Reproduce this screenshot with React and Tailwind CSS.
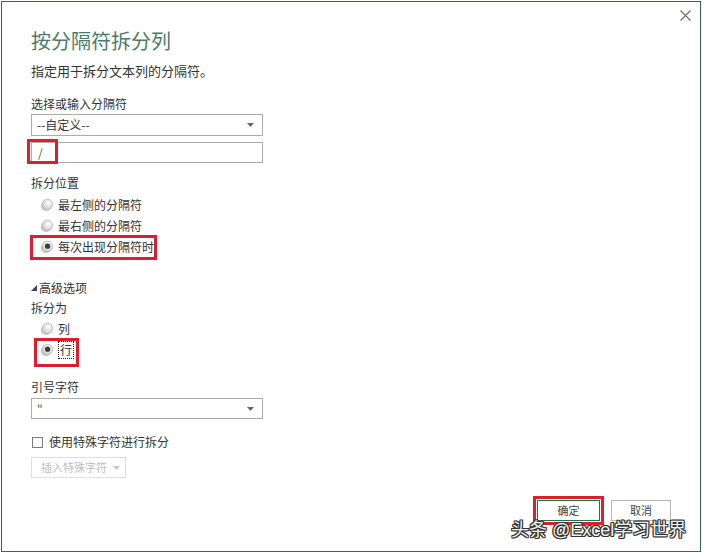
import React from "react";

const font = { fontFamily: '"Noto Sans CJK SC", "Noto Sans", sans-serif' };

function Radio({ checked }) {
  return (
    <svg width="14" height="14" viewBox="0 0 14 14" className="shrink-0">
      <defs>
        <radialGradient id={checked ? "rg1" : "rg0"} cx="0.6" cy="0.35" r="0.7">
          <stop offset="0" stopColor="#ffffff" />
          <stop offset="1" stopColor="#c9c9c9" />
        </radialGradient>
      </defs>
      <ellipse cx="6" cy="8.2" rx="5.2" ry="5" fill="#9aa0a6" opacity="0.55" />
      <circle cx="7.4" cy="6.4" r="5.2" fill={`url(#${checked ? "rg1" : "rg0"})`} stroke="#b4b4b4" strokeWidth="0.8" />
      {checked && <circle cx="7.6" cy="6.2" r="2.6" fill="#3a3a3a" />}
    </svg>
  );
}

function Caret({ color = "#666" }) {
  return (
    <svg width="7" height="4" viewBox="0 0 7 4">
      <polygon points="0,0 7,0 3.5,4" fill={color} />
    </svg>
  );
}

function RedBox({ className }) {
  return <span className={`pointer-events-none absolute border-[3px] border-[#dc1f2e] ${className}`} />;
}

export default function App() {
  return (
    <div className="w-[702px] h-[553px] bg-white p-px text-[#333]" style={font}>
      <div className="relative flex h-[551px] flex-col border border-[#217346] pl-[29px] pr-[29px]">
        <div className="-mr-[20px] flex h-[27px] justify-end pt-[8px]">
          <svg width="11" height="11" viewBox="0 0 11 11">
            <path d="M0.5 0.5 L10.5 10.5 M10.5 0.5 L0.5 10.5" stroke="#6b6b6b" strokeWidth="1.1" />
          </svg>
        </div>

        <div className="flex h-[24px] items-center text-[20px] leading-none text-[#4b7a66]">按分隔符拆分列</div>

        <div className="mt-[9px] flex h-[18px] items-center text-[13px]">指定用于拆分文本列的分隔符。</div>

        <div className="mt-[15px] flex h-[18px] items-center text-[12px]">选择或输入分隔符</div>
        <div className="mt-px flex h-[22px] w-[232px] items-center justify-between border border-[#ababab] pl-[5px] pr-[8px] text-[12px]">
          <span>--自定义--</span>
          <Caret />
        </div>
        <div className="relative mt-[6px] flex h-[21px] w-[232px] items-center border border-[#ababab] pl-[6px] text-[12px] text-[#555]">
          /
          <RedBox className="-left-[5px] -top-[4px] h-[25px] w-[31px]" />
        </div>

        <div className="mt-[11px] flex h-[18px] items-center text-[12px]">拆分位置</div>
        <div className="mt-[4px] flex h-[18px] items-center gap-[4px] pl-[9px] text-[12px]">
          <Radio />
          <span>最左侧的分隔符</span>
        </div>
        <div className="mt-[3px] flex h-[18px] items-center gap-[4px] pl-[9px] text-[12px]">
          <Radio />
          <span>最右侧的分隔符</span>
        </div>
        <div className="relative mt-[3px] flex h-[18px] items-center gap-[4px] pl-[9px] text-[12px]">
          <Radio checked />
          <span>每次出现分隔符时</span>
          <RedBox className="-left-px -top-[3px] h-[25px] w-[127px]" />
        </div>

        <div className="mt-[23px] flex h-[18px] items-center gap-[2px] text-[12px]">
          <svg width="6" height="6" viewBox="0 0 6 6">
            <polygon points="6,0 6,6 0,6" fill="#444" />
          </svg>
          <span>高级选项</span>
        </div>
        <div className="mt-[2px] flex h-[18px] items-center text-[12px]">拆分为</div>
        <div className="mt-[3px] flex h-[18px] items-center gap-[4px] pl-[9px] text-[12px]">
          <Radio />
          <span>列</span>
        </div>
        <div className="relative mt-[3px] flex h-[18px] items-center gap-[4px] pl-[9px] text-[12px]">
          <Radio checked />
          <span className="flex h-[18px] items-center border border-dotted border-[#222] px-px leading-none">行</span>
          <RedBox className="left-[3px] -top-[3px] h-[29px] w-[45px]" />
        </div>

        <div className="mt-[19px] flex h-[18px] items-center text-[12px]">引号字符</div>
        <div className="mt-[2px] flex h-[21px] w-[232px] items-center justify-between border border-[#ababab] pl-[5px] pr-[8px] text-[12px] text-[#555]">
          <span>"</span>
          <Caret />
        </div>

        <div className="mt-[14px] flex h-[18px] items-center gap-[6px] pl-px text-[12px]">
          <span className="h-[11px] w-[11px] border border-[#7a7a7a] bg-white" />
          <span>使用特殊字符进行拆分</span>
        </div>
        <div className="mt-[6px] flex h-[21px] w-[95px] items-center gap-[6px] border border-[#dedede] pl-[9px] text-[11px] text-[#bdbdbd]">
          <span>插入特殊字符</span>
          <Caret color="#c8c8c8" />
        </div>

        <div className="mt-[22px] flex justify-end gap-[11px] text-[11px]">
          <div className="relative flex h-[21px] w-[63px] items-center justify-center border border-[#217346] text-[#444]">
            确定
            <RedBox className="-left-[5px] -top-[5px] h-[29px] w-[71px]" />
          </div>
          <div className="flex h-[21px] w-[60px] items-center justify-center border border-[#b5b5b5] text-[#444]">取消</div>
        </div>

        <div
          className="absolute left-[509px] top-[517px] text-[18px] leading-[22px] text-[#f0f0f0] [text-shadow:1px_0_0_#333,-1px_0_0_#333,0_1px_0_#333,0_-1px_0_#333,1px_1px_0_#333,-1px_-1px_0_#333,1px_-1px_0_#333,-1px_1px_0_#333]"
          style={{ fontFamily: '"Liberation Sans", "Noto Sans CJK SC", sans-serif' }}
        >
          头条 @Excel学习世界
        </div>
      </div>
    </div>
  );
}
